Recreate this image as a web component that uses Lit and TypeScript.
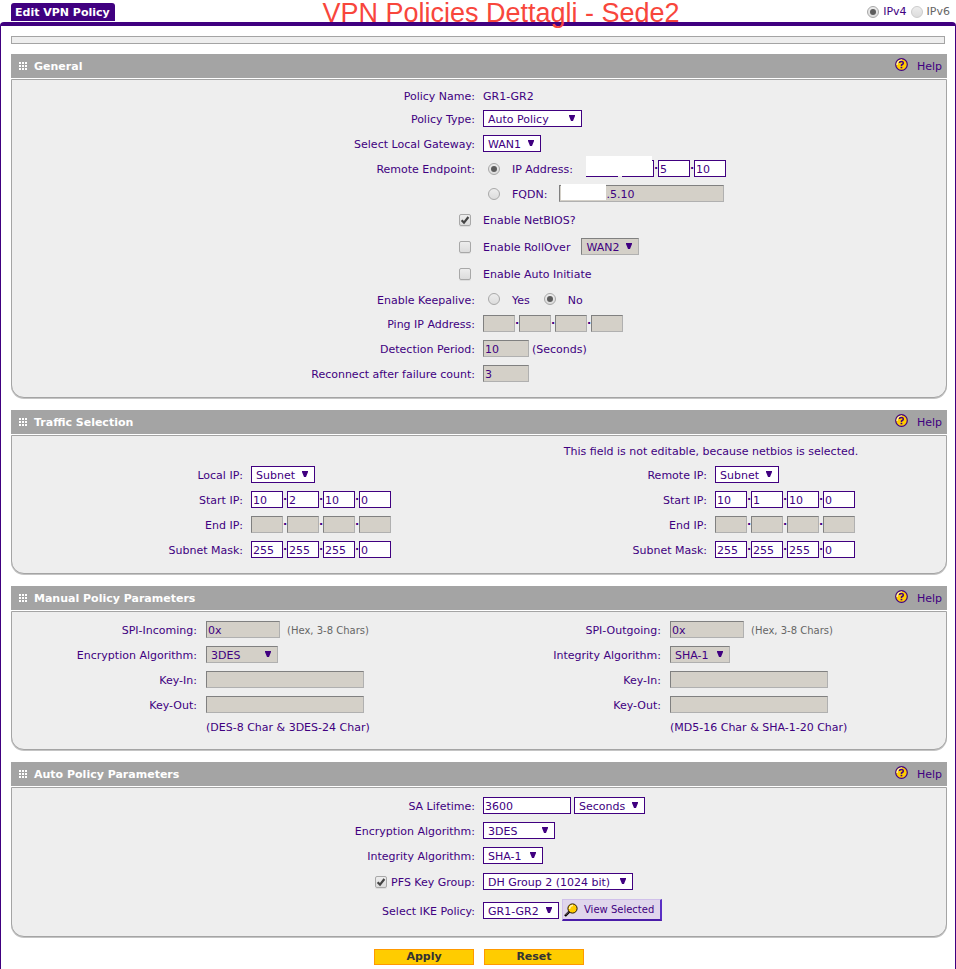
import { LitElement, html, css, svg, nothing, type TemplateResult } from "lit";
import { customElement, property } from "lit/decorators.js";
import { classMap } from "lit/directives/class-map.js";

interface SelectOptions {
  disabled?: boolean;
  label?: string;
}

const dots = [0, 3, 6].flatMap((y) => [0, 3, 6].map((x) => svg`<rect x=${x} y=${y} width="2" height="2" />`));

@customElement("policy-section")
export class PolicySection extends LitElement {
  @property() heading = "";

  static styles = css`
    :host {
      display: block;
      margin-bottom: 12px;
    }
    .head {
      display: flex;
      align-items: center;
      height: 24px;
      margin-bottom: 1px;
      padding: 0 5px 0 8px;
      background: #a4a4a4;
    }
    .grip {
      width: 8px;
      height: 8px;
      margin-right: 7px;
      fill: #fff;
    }
    h2 {
      flex: 1;
      margin: 0;
      color: #fff;
      font-size: 11px;
      font-weight: bold;
    }
    a {
      display: flex;
      align-items: center;
      gap: 9px;
      color: #400080;
      text-decoration: none;
    }
    .help {
      width: 13px;
      height: 13px;
      margin-bottom: 3px;
    }
    .body {
      padding: 5px 3px 11px;
      border: 1px solid #a4a4a4;
      border-radius: 0 0 13px 13px;
      background: #eee;
      box-shadow: 0 1px 0 #c4c4c4;
    }
  `;

  render() {
    return html`
      <div class="head">
        <svg class="grip" viewBox="0 0 8 8" shape-rendering="crispEdges" aria-hidden="true">${dots}</svg>
        <h2>${this.heading}</h2>
        <a href="#help">
          <svg class="help" viewBox="0 0 13 13" aria-hidden="true">
            <circle cx="6.5" cy="6.5" r="5.8" fill="#fc0" stroke="#400080" stroke-width="1.2" />
            <path d="M2 7A4.6 4.6 0 0 1 7 2" fill="none" stroke="#fff6c8" stroke-width="1.2" />
            <path d="M4.6 5V4.4Q4.8 3.5 6.5 3.5T8.4 5Q8.4 6 6.5 7V8" fill="none" stroke="#400080" stroke-width="1.5" />
            <rect x="5.6" y="8.8" width="1.7" height="1.5" fill="#400080" />
          </svg>
          Help
        </a>
      </div>
      <div class="body"><slot></slot></div>
    `;
  }
}

@customElement("app-root")
export class AppRoot extends LitElement {
  static styles = css`
    :host {
      display: flex;
      flex-direction: column;
      position: relative;
      box-sizing: border-box;
      min-height: 100vh;
      background: #fff;
      color: #400080;
      font: 11px/13px Verdana, "DejaVu Sans", sans-serif;
    }
    * {
      box-sizing: border-box;
    }
    .title {
      position: absolute;
      top: 0;
      left: 0;
      right: 0;
      margin: 0;
      padding-left: 46px;
      color: #f8463c;
      font: 27px/27px "Liberation Sans", Arial, sans-serif;
      text-align: center;
      pointer-events: none;
    }
    .top {
      display: flex;
      align-items: flex-end;
      justify-content: space-between;
      height: 22px;
      padding: 0 6px 1px 11px;
    }
    .tab {
      margin: 0;
      padding: 3px 5px 2px 4px;
      border-radius: 3px 3px 0 0;
      background: #400080;
      color: #fff;
      font-size: 11px;
      line-height: 13px;
    }
    .versions {
      display: flex;
      align-items: center;
      gap: 4px;
      margin-bottom: 3px;
    }
    .muted {
      color: #666;
    }
    .frame {
      flex: 1;
      padding: 10px 8px 4px 10px;
      border: 1px solid #400080;
      border-top-width: 4px;
      border-bottom: 0;
      border-radius: 4px 4px 0 0;
    }
    .strip {
      height: 8px;
      margin: 0 2px 10px 0;
      border: 1px solid #a4a4a4;
      background: #eee;
    }
    .halves {
      display: grid;
      grid-template-columns: 1fr 1fr;
      align-items: end;
    }
    .note {
      height: 21px;
      margin: 0;
      line-height: 22px;
      text-align: center;
    }
    .row {
      display: grid;
      grid-template-columns: 1fr 1fr;
      column-gap: 8px;
      align-items: center;
      height: 25px;
    }
    .manual .row {
      grid-template-columns: 2fr 3fr;
      column-gap: 9px;
    }
    .row.short {
      height: 21px;
    }
    .row.tight {
      height: 24px;
    }
    .row.tall {
      height: 27px;
    }
    .row.last {
      height: 30px;
    }
    .name {
      display: flex;
      align-items: center;
      justify-content: flex-end;
      gap: 4px;
      white-space: nowrap;
    }
    .name.tick {
      padding-right: 4px;
    }
    .field {
      display: flex;
      align-items: center;
      white-space: nowrap;
    }
    .row label,
    .say {
      padding-top: 2px;
    }
    .gap3 {
      gap: 3px;
    }
    .gap7 {
      gap: 7px;
    }
    .gap11 {
      gap: 11px;
    }
    .choices {
      gap: 12px;
      padding-left: 5px;
    }
    .choices .next {
      margin-left: 2px;
    }
    .choices .wide {
      min-width: 62px;
    }
    .hint {
      color: #666;
      font-size: 10px;
    }
    .text,
    select {
      height: 17px;
      margin: 0;
      border: 1px solid #400080;
      border-radius: 0;
      background: #fff;
      color: #400080;
      font: inherit;
      line-height: 13px;
      opacity: 1;
    }
    .text {
      padding: 2px 1px 0;
    }
    .text:disabled,
    select:disabled {
      border-color: #808080 #b0b0b0 #b0b0b0 #808080;
      background: #d4d0c8;
    }
    .octet {
      width: 32px;
    }
    .count {
      width: 46px;
    }
    .spi {
      width: 74px;
    }
    .life {
      width: 88px;
    }
    .key {
      width: 158px;
    }
    .fqdn {
      width: 165px;
      padding-left: 46px;
    }
    .ip {
      display: flex;
      align-items: center;
    }
    .dot {
      width: 4px;
      font-weight: bold;
      text-align: center;
    }
    .masked {
      position: relative;
    }
    .mask {
      position: absolute;
      background: #fff;
    }
    .ip-mask {
      left: 0;
      top: -4px;
      width: 66px;
      height: 20px;
    }
    .fqdn-mask {
      left: 2px;
      top: -1px;
      width: 45px;
      height: 16px;
    }
    .drop {
      display: inline-flex;
      position: relative;
    }
    select {
      width: 100%;
      padding: 2px 0 0 4px;
      appearance: none;
    }
    .arrow {
      position: absolute;
      top: 5px;
      right: 7px;
      width: 6px;
      height: 6px;
      fill: #400080;
      pointer-events: none;
    }
    .w58 {
      width: 58px;
    }
    .w60 {
      width: 60px;
    }
    .w64 {
      width: 64px;
    }
    .w71 {
      width: 71px;
    }
    .w72 {
      width: 72px;
    }
    .w76 {
      width: 76px;
    }
    .w99 {
      width: 99px;
    }
    .w150 {
      width: 150px;
    }
    input[type="radio"],
    input[type="checkbox"] {
      display: grid;
      place-content: center;
      flex: none;
      width: 12px;
      height: 12px;
      margin: 0;
      border: 1px solid #a8a8a8;
      background: linear-gradient(#ededed, #dcdcdc);
      appearance: none;
    }
    input[type="radio"] {
      border-radius: 50%;
    }
    input[type="checkbox"] {
      border-radius: 2px;
      box-shadow: 0 1px 0 #ddd;
    }
    input[type="radio"]:checked::before {
      content: "";
      width: 6px;
      height: 6px;
      border-radius: 50%;
      background: #5c5c5c;
    }
    input[type="radio"]:disabled {
      border-color: #ccc;
    }
    .check {
      display: inline-grid;
      flex: none;
    }
    .check > * {
      grid-area: 1 / 1;
    }
    .check svg {
      width: 12px;
      height: 12px;
      pointer-events: none;
    }
    .view {
      display: flex;
      align-items: center;
      gap: 6px;
      width: 100px;
      height: 22px;
      padding: 0 0 0 1px;
      border: 1px solid #d0c0ea;
      border-right: 2px solid #5a2fc4;
      border-bottom: 2px solid #4a1ca8;
      background: #e0d6ec;
      color: #400080;
      font: inherit;
      font-size: 10px;
      white-space: nowrap;
    }
    .view svg {
      flex: none;
      width: 14px;
      height: 14px;
    }
    .actions {
      display: flex;
      justify-content: center;
      gap: 10px;
    }
    .actions button {
      width: 100px;
      height: 16px;
      padding: 0;
      border: 1px solid #f90;
      background: #fc0;
      color: #333;
      font: bold 11px/14px Verdana, "DejaVu Sans", sans-serif;
    }
  `;

  private select(id: string, width: string, value: string, options: SelectOptions = {}) {
    return html`<span class="drop ${width}">
      <select id=${id} ?disabled=${options.disabled} aria-label=${options.label ?? nothing}>
        <option>${value}</option>
      </select>
      <svg class="arrow" viewBox="0 0 6 6" aria-hidden="true"><path d="M0 0H6V1L4 6H2L0 1Z" /></svg>
    </span>`;
  }

  private text(id: string, width: string, value = "", disabled = false) {
    return html`<input class="text ${width}" id=${id} type="text" .value=${value} ?disabled=${disabled} />`;
  }

  private ip(id: string, name: string, octets: string[], disabled = false, mask: unknown = nothing) {
    return html`<span class=${classMap({ ip: true, masked: mask !== nothing })}>
      ${octets.map(
        (value, i) => html`${i ? html`<span class="dot">·</span>` : nothing}<input
            class="text octet"
            id=${i ? `${id}-${i}` : id}
            type="text"
            aria-label="${name} ${i + 1}"
            .value=${value}
            ?disabled=${disabled}
          />`,
      )}${mask}
    </span>`;
  }

  private checkbox(id: string, checked = false) {
    return html`<span class="check">
      <input type="checkbox" id=${id} ?checked=${checked} />
      ${checked
        ? html`<svg viewBox="0 0 12 12" aria-hidden="true">
            <path d="M2.6 6.2L5 8.6L9.4 3" fill="none" stroke="#444" stroke-width="2.2" />
          </svg>`
        : nothing}
    </span>`;
  }

  private row(id: string, name: string, field: unknown, size = "", fieldClass = ""): TemplateResult {
    return html`<div class="row ${size}">
      <div class="name">${id ? html`<label for=${id}>${name}</label>` : html`<span class="say">${name}</span>`}</div>
      <div class="field ${fieldClass}">${field}</div>
    </div>`;
  }

  private tickRow(id: string, name: string, checked: boolean, extra: unknown = nothing) {
    return html`<div class="row tall">
      <div class="name tick">${this.checkbox(id, checked)}</div>
      <div class="field gap11"><label for=${id}>${name}</label>${extra}</div>
    </div>`;
  }

  private selector(side: string, second: string) {
    const key = side.toLowerCase();
    return html`
      ${this.row(`${key}-ip`, `${side} IP:`, this.select(`${key}-ip`, "w64", "Subnet"))}
      ${this.row(`${key}-start`, "Start IP:", this.ip(`${key}-start`, `${side} start IP`, ["10", second, "10", "0"]))}
      ${this.row(`${key}-end`, "End IP:", this.ip(`${key}-end`, `${side} end IP`, ["", "", "", ""], true))}
      ${this.row(`${key}-mask`, "Subnet Mask:", this.ip(`${key}-mask`, `${side} mask`, ["255", "255", "255", "0"]))}
    `;
  }

  private keys(side: string, algorithm: string, value: string, width: string, hint: string) {
    const key = side.toLowerCase();
    return html`<div>
      ${this.row(`${key}-spi`, `SPI-${side}:`, html`${this.text(`${key}-spi`, "spi", "0x", true)}<span class="say hint">(Hex, 3-8 Chars)</span>`, "", "gap7")}
      ${this.row(`${key}-alg`, algorithm, this.select(`${key}-alg`, width, value, { disabled: true }))}
      ${this.row(`${key}-in`, "Key-In:", this.text(`${key}-in`, "key", "", true))}
      ${this.row(`${key}-out`, "Key-Out:", this.text(`${key}-out`, "key", "", true))}
      ${this.row("", "", html`<span>${hint}</span>`, "short")}
    </div>`;
  }

  private general() {
    return html`<policy-section heading="General">
      ${this.row("", "Policy Name:", html`<span class="say">GR1-GR2</span>`, "short")}
      ${this.row("type", "Policy Type:", this.select("type", "w99", "Auto Policy"))}
      ${this.row("gateway", "Select Local Gateway:", this.select("gateway", "w58", "WAN1"))}
      ${this.row(
        "",
        "Remote Endpoint:",
        html`<input type="radio" name="endpoint" id="by-ip" checked /><label class="wide" for="by-ip">IP Address:</label>
          ${this.ip("endpoint-ip", "Endpoint IP", ["", "", "5", "10"], false, html`<span class="mask ip-mask"></span>`)}`,
        "",
        "choices",
      )}
      ${this.row(
        "",
        "",
        html`<input type="radio" name="endpoint" id="by-fqdn" /><label for="by-fqdn">FQDN:</label>
          <span class="ip masked">
            <input class="text fqdn" type="text" aria-label="Endpoint FQDN" .value=${".5.10"} disabled />
            <span class="mask fqdn-mask"></span>
          </span>`,
        "",
        "choices",
      )}
      ${this.tickRow("netbios", "Enable NetBIOS?", true)}
      ${this.tickRow("rollover", "Enable RollOver", false, this.select("rollover-wan", "w58", "WAN2", { disabled: true, label: "RollOver gateway" }))}
      ${this.tickRow("initiate", "Enable Auto Initiate", false)}
      ${this.row(
        "",
        "Enable Keepalive:",
        html`<input type="radio" name="keepalive" id="ka-yes" /><label for="ka-yes">Yes</label>
          <input class="next" type="radio" name="keepalive" id="ka-no" checked /><label for="ka-no">No</label>`,
        "tight",
        "choices",
      )}
      ${this.row("ping", "Ping IP Address:", this.ip("ping", "Ping IP", ["", "", "", ""], true))}
      ${this.row("period", "Detection Period:", html`${this.text("period", "count", "10", true)}<span class="say">(Seconds)</span>`, "", "gap3")}
      ${this.row("failures", "Reconnect after failure count:", this.text("failures", "count", "3", true))}
    </policy-section>`;
  }

  private auto() {
    return html`<policy-section heading="Auto Policy Parameters">
      ${this.row(
        "lifetime",
        "SA Lifetime:",
        html`${this.text("lifetime", "life", "3600")}${this.select("unit", "w71", "Seconds", { label: "Lifetime unit" })}`,
        "",
        "gap3",
      )}
      ${this.row("enc", "Encryption Algorithm:", this.select("enc", "w72", "3DES"))}
      ${this.row("integ", "Integrity Algorithm:", this.select("integ", "w60", "SHA-1"))}
      <div class="row tall">
        <div class="name">${this.checkbox("pfs", true)}<label for="pfs">PFS Key Group:</label></div>
        <div class="field">${this.select("group", "w150", "DH Group 2 (1024 bit)", { label: "PFS key group" })}</div>
      </div>
      ${this.row(
        "ike",
        "Select IKE Policy:",
        html`${this.select("ike", "w76", "GR1-GR2")}
          <button class="view" type="button">
            <svg viewBox="0 0 14 14" aria-hidden="true">
              <path d="M1 13L5.5 8.5" stroke="#000" stroke-width="2.4" />
              <path d="M1.5 12L5 8.5" stroke="#b9a" stroke-width=".7" />
              <circle cx="8.5" cy="5.5" r="4.6" fill="#fc0" stroke="#221500" stroke-width="1" />
              <path d="M5.6 6A3 3 0 0 1 9 2.6" fill="none" stroke="#fff4b0" stroke-width="1.5" />
            </svg>
            View Selected
          </button>`,
        "last",
        "gap3",
      )}
    </policy-section>`;
  }

  render() {
    return html`
      <header class="top">
        <h2 class="tab">Edit VPN Policy</h2>
        <div class="versions">
          <input type="radio" name="version" id="v4" checked /><label for="v4">IPv4</label>
          <input type="radio" name="version" id="v6" disabled /><label class="muted" for="v6">IPv6</label>
        </div>
      </header>
      <main class="frame">
        <div class="strip"></div>
        ${this.general()}
        <policy-section heading="Traffic Selection">
          <div class="halves">
            <div>${this.selector("Local", "2")}</div>
            <div>
              <p class="note">This field is not editable, because netbios is selected.</p>
              ${this.selector("Remote", "1")}
            </div>
          </div>
        </policy-section>
        <policy-section heading="Manual Policy Parameters">
          <div class="halves manual">
            ${this.keys("Incoming", "Encryption Algorithm:", "3DES", "w72", "(DES-8 Char & 3DES-24 Char)")}
            ${this.keys("Outgoing", "Integrity Algorithm:", "SHA-1", "w60", "(MD5-16 Char & SHA-1-20 Char)")}
          </div>
        </policy-section>
        ${this.auto()}
        <div class="actions">
          <button type="button">Apply</button>
          <button type="button">Reset</button>
        </div>
      </main>
      <h1 class="title">VPN Policies Dettagli - Sede2</h1>
    `;
  }
}
